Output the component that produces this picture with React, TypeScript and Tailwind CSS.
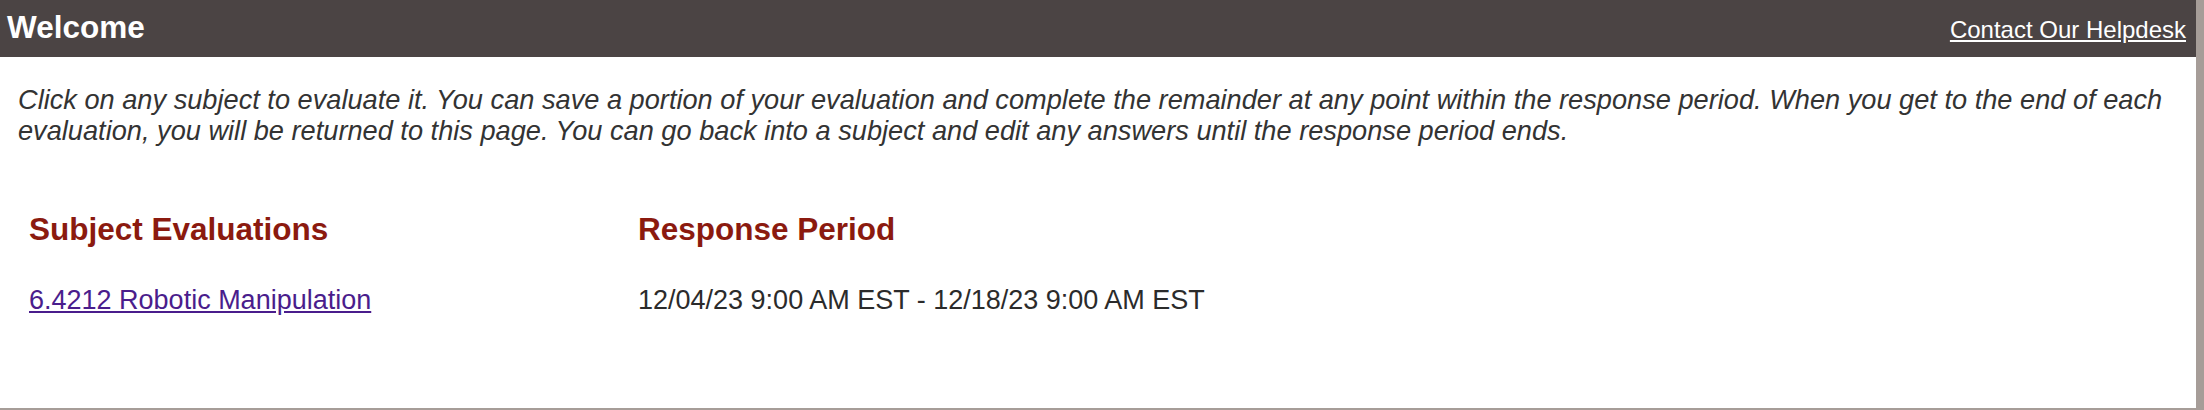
import React from "react";

const evaluations = [
  {
    subject: "6.4212 Robotic Manipulation",
    period: "12/04/23 9:00 AM EST - 12/18/23 9:00 AM EST",
  },
];

export default function App() {
  return (
    <div className="w-[2204px] h-[410px] bg-white border-r-[8px] border-b-2 border-[#a69d98] font-['Liberation_Sans',Arial,sans-serif] leading-[1.15] overflow-hidden">
      <div className="h-[57px] bg-[#4b4444] flex items-baseline justify-between pt-[9px] pl-[7px] pr-[10px]">
        <h1 className="text-[31.5px] font-bold text-white">Welcome</h1>
        <a href="#" className="text-[24px] text-white underline">
          Contact Our Helpdesk
        </a>
      </div>

      <p className="mt-[27px] pl-[18px] pr-[10px] text-[27.2px] italic text-[#333333]">
        Click on any subject to evaluate it. You can save a portion of your evaluation and complete the
        remainder at any point within the response period. When you get to the end of each evaluation, you
        will be returned to this page. You can go back into a subject and edit any answers until the response
        period ends.
      </p>

      <div className="mt-[64px] pl-[29px] grid grid-cols-[609px_1fr]">
        <h2 className="text-[31.5px] font-bold text-[#8b1a0f]">Subject Evaluations</h2>
        <h2 className="text-[31.5px] font-bold text-[#8b1a0f]">Response Period</h2>
        {evaluations.map((e) => (
          <React.Fragment key={e.subject}>
            <a href="#" className="mt-[38px] text-[27px] text-[#4a1d8c] underline justify-self-start">
              {e.subject}
            </a>
            <span className="mt-[38px] text-[27px] text-[#2b2b2b]">{e.period}</span>
          </React.Fragment>
        ))}
      </div>
    </div>
  );
}
